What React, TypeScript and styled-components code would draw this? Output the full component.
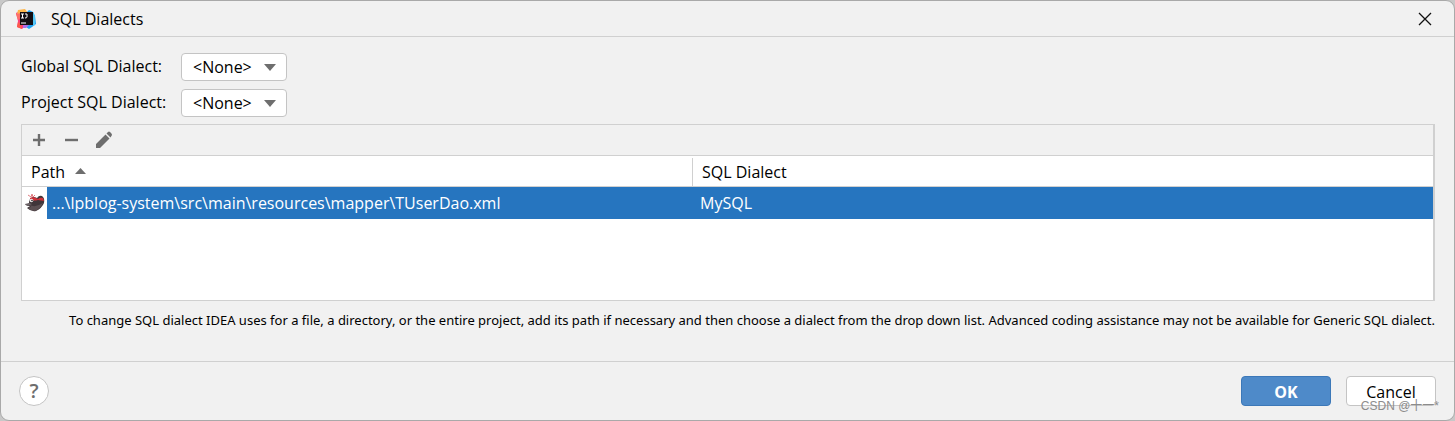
import React from "react";
import styled, { createGlobalStyle } from "styled-components";

const GlobalStyle = createGlobalStyle`
  *, *::before, *::after { box-sizing: border-box; }
  body {
    margin: 0;
    background: #c8c8c8;
    color: #000;
    font-family: "Open Sans", "Noto Sans CJK SC", sans-serif;
    font-size: 16px;
    line-height: 20px;
  }
  button, select { font: inherit; color: inherit; }
`;

const Dialog = styled.main`
  position: relative;
  display: flex;
  flex-direction: column;
  min-height: 100vh;
  background: #f1f1f1;
  border: 1px solid #a9a9a9;
  border-radius: 9px;
`;

const TitleBar = styled.header`
  display: flex;
  align-items: center;
  height: 36px;
  padding: 1px 19px 0 15px;
  border-bottom: 1px solid #d0d0d0;
`;

const Title = styled.h1`
  flex: 1;
  margin: 0 0 0 15px;
  font-size: 16px;
  font-weight: 400;
`;

const IconButton = styled.button`
  display: flex;
  align-items: center;
  justify-content: center;
  width: 20px;
  height: 20px;
  padding: 0;
  border: 0;
  background: none;
`;

const Body = styled.section`
  display: flex;
  flex-direction: column;
  flex: 1;
  padding: 16px 19px 0 20px;
`;

const Fields = styled.div`
  display: grid;
  grid-template-columns: 160px 106px;
  row-gap: 8px;
  align-items: center;
  margin-bottom: 7px;
`;

const FieldLabel = styled.label`
  padding-bottom: 2px;
`;

const SelectBox = styled.div`
  display: grid;
  align-items: center;
  height: 28px;

  > * { grid-area: 1 / 1; }
  > svg {
    justify-self: end;
    margin-right: 11px;
    pointer-events: none;
  }
`;

const Select = styled.select`
  appearance: none;
  width: 100%;
  height: 28px;
  padding: 0 28px 0 11px;
  border: 1px solid #c4c4c4;
  border-radius: 4px;
  background: #fff;
`;

const TablePanel = styled.div`
  display: flex;
  flex-direction: column;
  min-height: 177px;
  background: #fff;
  border: 1px solid #d0d0d0;
  border-right-width: 2px;
`;

const Toolbar = styled.div`
  display: flex;
  align-items: center;
  gap: 12px;
  height: 31px;
  padding-left: 7px;
  background: #f1f1f1;
  border-bottom: 1px solid #d0d0d0;
`;

const Table = styled.table`
  width: 100%;
  table-layout: fixed;
  border-collapse: separate;
  border-spacing: 0;
`;

const IconCol = styled.col`
  width: 25px;
`;

const PathCol = styled.col`
  width: 646px;
`;

const HeadCell = styled.th<{ $divided?: boolean }>`
  height: 31px;
  padding: 2px 9px 0;
  border-bottom: 1px solid #d0d0d0;
  background: ${(p) => (p.$divided ? "linear-gradient(#d0d0d0, #d0d0d0) right 2px / 1px 28px no-repeat" : "none")};
  font-weight: 400;
  text-align: left;

  svg { margin: 0 0 4px 10px; }
`;

const IconCell = styled.td`
  padding: 0 0 0 3px;
  vertical-align: middle;

  svg { display: block; }
`;

const Cell = styled.td<{ $indent: number }>`
  height: 32px;
  padding: 0 0 0 ${(p) => p.$indent}px;
  background: #2675bf;
  color: #fff;
`;

const Hint = styled.p`
  margin: 9px 0 0;
  font-family: "Noto Sans", sans-serif;
  font-size: 13px;
  text-align: right;
`;

const Footer = styled.footer`
  display: flex;
  align-items: flex-start;
  justify-content: space-between;
  height: 59px;
  padding: 14px 18px 0;
  border-top: 1px solid #d0d0d0;
`;

const HelpButton = styled.button`
  width: 30px;
  height: 30px;
  padding: 0;
  border: 1px solid #c4c4c4;
  border-radius: 50%;
  background: #fff;
  color: #6e6e6e;
  font-size: 20px;
  font-weight: 600;
`;

const Actions = styled.div`
  display: flex;
  gap: 15px;
`;

const Button = styled.button<{ $primary?: boolean }>`
  width: 90px;
  height: 30px;
  padding: 2px 0 0;
  border: 1px solid ${(p) => (p.$primary ? "#3c78b8" : "#c4c4c4")};
  border-radius: 4px;
  background: ${(p) => (p.$primary ? "#4e8ac9" : "#fff")};
  color: ${(p) => (p.$primary ? "#fff" : "#000")};
  font-weight: ${(p) => (p.$primary ? 700 : 400)};
`;

const Watermark = styled.span`
  position: absolute;
  right: 15px;
  bottom: 5px;
  color: #8c8c8c;
  font: 12px/18px "Liberation Sans", "Noto Sans CJK SC", sans-serif;
  pointer-events: none;
`;

const AppLogo = () => (
  <svg width="20" height="20" viewBox="0 0 20 20" aria-hidden="true">
    <path d="M0 4 4 2l5 3v12l-3 3-5-2 1-6z" fill="#fb3f7c" />
    <path d="M2 1 9 0l3 4-6 2-5-1z" fill="#fdb54a" />
    <path d="m0 5 5-1v5l-3 2z" fill="#fc7068" />
    <path d="m10 4 3-3 4 2 2 4 1 8-4 3-3 2-6-4z" fill="#1ea2f4" />
    <path d="m17 3 2 4v9l-2 1z" fill="#55c8f6" />
    <path d="m7 16 6 0-3 3-3 0z" fill="#b06de8" />
    <path d="m2 13 3 2 1 5-5-2z" fill="#fb5a4a" />
    <path fill="#120d12" d="M4 3h13v13H4z" />
    <path d="M5 5h3M6.500 5v4M5 9h3M9 5h2v3q0 1-2 1M5 14h5" fill="none" stroke="#fff" />
  </svg>
);

const BirdIcon = () => (
  <svg width="20" height="20" viewBox="0 0 20 20" aria-hidden="true">
    <path d="M0 11q3 1 4-1 0-5 4-6 2 0 4 1 2-3 5-2 3 2 2 7-2 5-8 8-5 1-9-3l3-2Q1 13 0 11z" fill="#40363a" />
    <path d="M5 12q5 3 13-2-3 6-8 8-4 0-7-3l3-1z" fill="#5c5053" />
    <path d="M5 5q4-2 8 1 2-2 5-1l1 3-6-1q-4 1-8 0z" fill="#cf3038" />
    <path d="m3 2 3 2 1-3 1 3 2-2" fill="none" stroke="#df7a80" />
    <circle cx="6.500" cy="7.500" r="1.800" fill="#eee" />
    <circle cx="7" cy="7.500" r=".8" fill="#222" />
    <path d="m0 11 4-1 3 1-4 2z" fill="#6d6468" />
  </svg>
);

const CloseIcon = () => (
  <svg width="14" height="14" viewBox="0 0 14 14" aria-hidden="true">
    <path d="m1 1 12 12M13 1 1 13" stroke="#111" strokeWidth="1.300" />
  </svg>
);

const AddIcon = () => (
  <svg width="14" height="14" viewBox="0 0 14 14" aria-hidden="true">
    <path d="M7 1v12M1 7h12" stroke="#6e6e6e" strokeWidth="2.400" />
  </svg>
);

const RemoveIcon = () => (
  <svg width="14" height="14" viewBox="0 0 14 14" aria-hidden="true">
    <path d="M1 7h13" stroke="#6e6e6e" strokeWidth="2.400" />
  </svg>
);

const EditIcon = () => (
  <svg width="18" height="18" viewBox="0 0 18 18" aria-hidden="true">
    <path d="M2 17v-4L11.500 3.500l4 4L6 17zM12.500 2.500 14 1q1-1 2 0l1 1q1 1 1 2l-1.500 2.500z" fill="#6e6e6e" />
  </svg>
);

const DownArrow = () => (
  <svg width="12" height="7" viewBox="0 0 12 7" aria-hidden="true">
    <path d="M0 0h12L6 7z" fill="#6e6e6e" />
  </svg>
);

const SortArrow = () => (
  <svg width="11" height="6" viewBox="0 0 11 6" aria-hidden="true">
    <path d="M0 6h11L5.500 0z" fill="#6e6e6e" />
  </svg>
);

const DialectField = ({ id, label }: { id: string; label: string }) => (
  <>
    <FieldLabel htmlFor={id}>{label}</FieldLabel>
    <SelectBox>
      <Select id={id}>
        <option>&lt;None&gt;</option>
      </Select>
      <DownArrow />
    </SelectBox>
  </>
);

export default function App() {
  return (
    <>
      <GlobalStyle />
      <Dialog>
        <TitleBar>
          <AppLogo />
          <Title>SQL Dialects</Title>
          <IconButton aria-label="Close"><CloseIcon /></IconButton>
        </TitleBar>
        <Body>
          <Fields>
            <DialectField id="global-dialect" label="Global SQL Dialect:" />
            <DialectField id="project-dialect" label="Project SQL Dialect:" />
          </Fields>
          <TablePanel>
            <Toolbar>
              <IconButton aria-label="Add"><AddIcon /></IconButton>
              <IconButton aria-label="Remove"><RemoveIcon /></IconButton>
              <IconButton aria-label="Edit"><EditIcon /></IconButton>
            </Toolbar>
            <Table>
              <colgroup>
                <IconCol />
                <PathCol />
                <col />
              </colgroup>
              <thead>
                <tr>
                  <HeadCell colSpan={2} $divided>Path<SortArrow /></HeadCell>
                  <HeadCell>SQL Dialect</HeadCell>
                </tr>
              </thead>
              <tbody>
                <tr>
                  <IconCell><BirdIcon /></IconCell>
                  <Cell $indent={5}>...\lpblog-system\src\main\resources\mapper\TUserDao.xml</Cell>
                  <Cell $indent={7}>MySQL</Cell>
                </tr>
              </tbody>
            </Table>
          </TablePanel>
          <Hint>
            To change SQL dialect IDEA uses for a file, a directory, or the entire project, add its path if necessary and then choose a dialect from the drop down list. Advanced coding assistance may not be available for Generic SQL dialect.
          </Hint>
        </Body>
        <Footer>
          <HelpButton aria-label="Help">?</HelpButton>
          <Actions>
            <Button $primary>OK</Button>
            <Button>Cancel</Button>
          </Actions>
        </Footer>
        <Watermark>CSDN @十一*</Watermark>
      </Dialog>
    </>
  );
}
